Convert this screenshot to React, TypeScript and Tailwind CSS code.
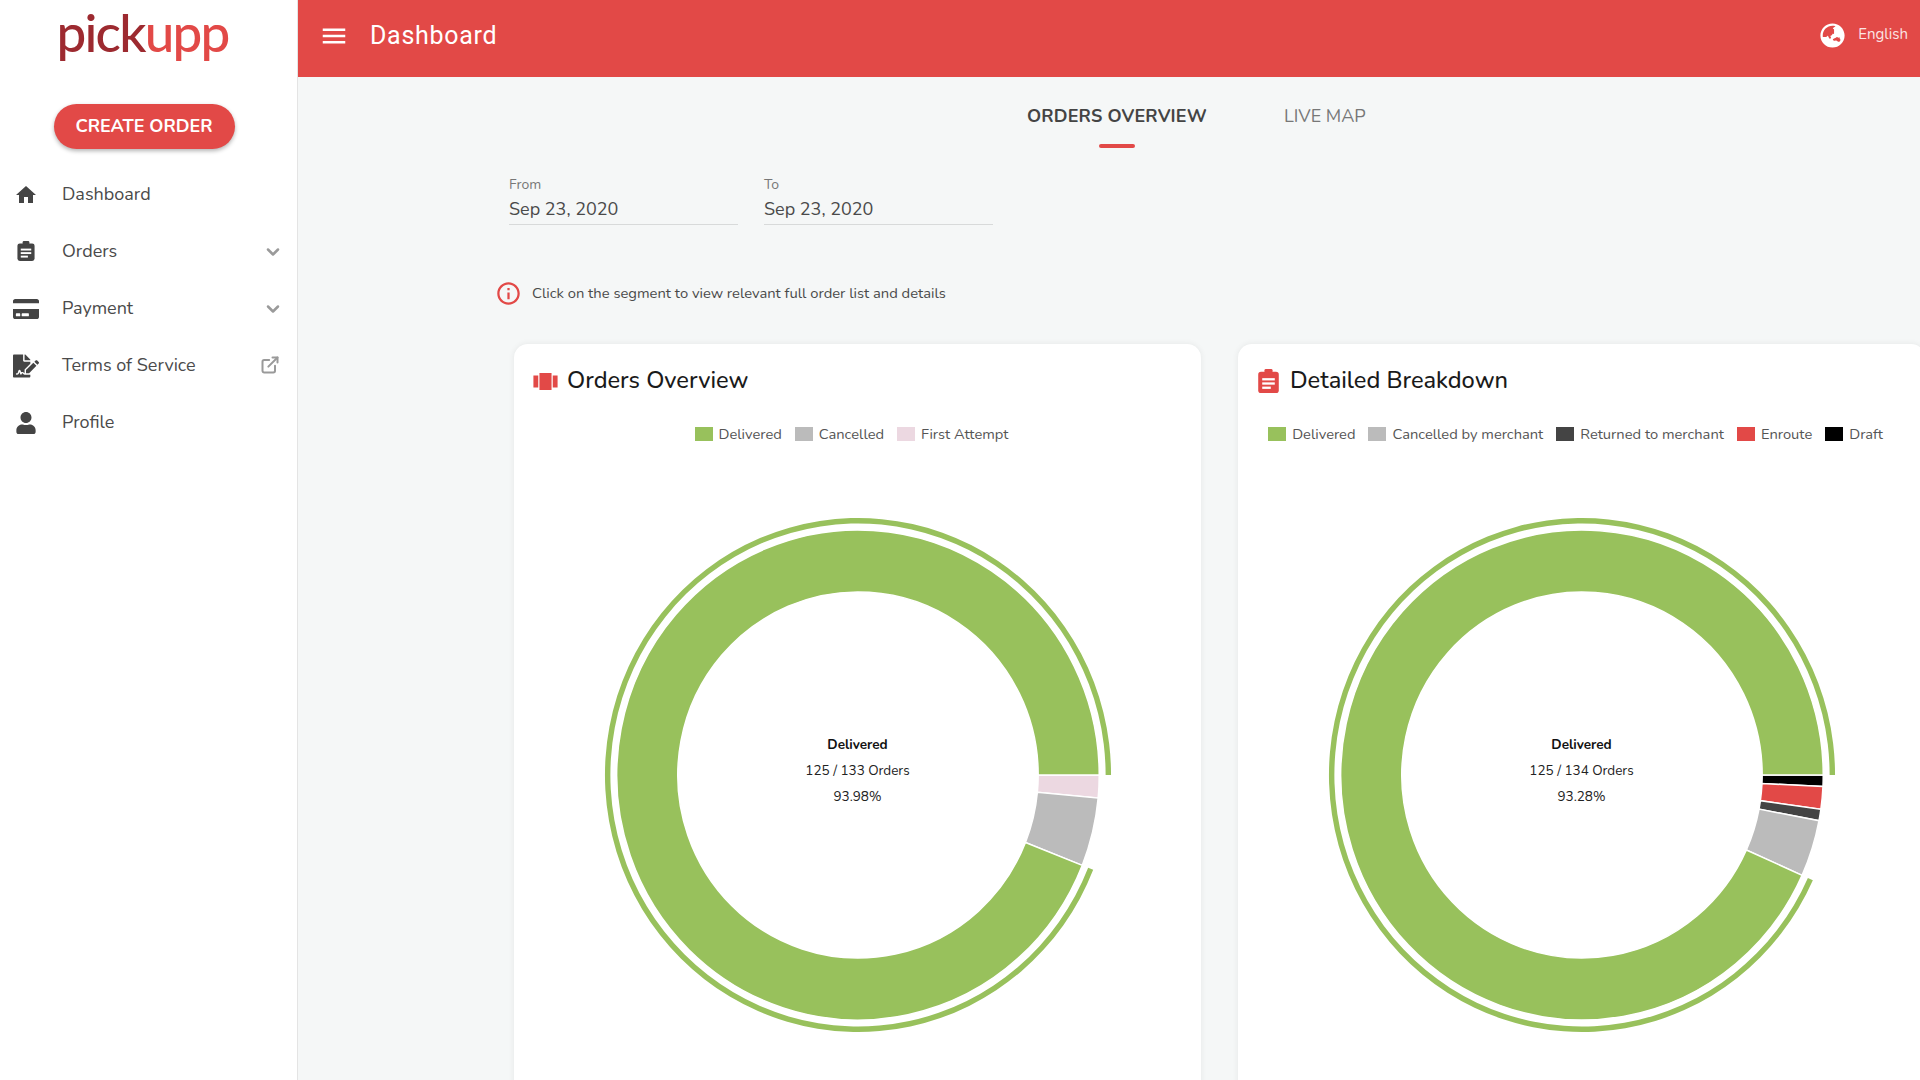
import React from "react";
import { MdHome, MdMenu, MdInfoOutline, MdViewCarousel } from "react-icons/md";
import { FaCreditCard, FaFileSignature, FaUser, FaGlobeAsia } from "react-icons/fa";
import { ExternalLink, ChevronDown } from "lucide-react";

const GREEN = "#98c15c";
const GRAY = "#bbbbbb";
const PINK = "#ecd8e1";
const DARK = "#444444";
const RED = "#e24947";
const BLACK = "#000000";

type Seg = { v: number; c: string };

function pt(r: number, deg: number, c: number) {
  const a = (deg * Math.PI) / 180;
  return [c + r * Math.cos(a), c + r * Math.sin(a)];
}

function sector(ri: number, ro: number, a0: number, a1: number, c: number) {
  const large = a1 - a0 > 180 ? 1 : 0;
  const [x0, y0] = pt(ro, a0, c);
  const [x1, y1] = pt(ro, a1, c);
  const [x2, y2] = pt(ri, a1, c);
  const [x3, y3] = pt(ri, a0, c);
  return `M${x0} ${y0}A${ro} ${ro} 0 ${large} 1 ${x1} ${y1}L${x2} ${y2}A${ri} ${ri} 0 ${large} 0 ${x3} ${y3}Z`;
}

function Donut({ segs, l1, l2, l3 }: { segs: Seg[]; l1: string; l2: string; l3: string }) {
  const total = segs.reduce((s, x) => s + x.v, 0);
  const C = 260;
  let a = 0;
  const parts = segs.map((s) => {
    const a0 = a;
    a += (s.v / total) * 360;
    return { ...s, a0, a1: a };
  });
  const last = parts[parts.length - 1];
  return (
    <div className="relative w-[512px] h-[520px] mx-auto">
      <svg width="512" height="520" viewBox="0 0 520 520" preserveAspectRatio="none" className="block">
        {parts.map((p, i) => (
          <path key={i} d={sector(183, 245, p.a0, p.a1, C)} fill={p.c} stroke="#ffffff" strokeWidth="1.5" />
        ))}
        <path d={sector(251.5, 257, last.a0, last.a1, C)} fill={GREEN} />
      </svg>
      <div className="absolute inset-0 pb-[9px] flex flex-col items-center justify-center text-[13.5px] leading-[26px] text-[#222222]">
        <div className="font-bold text-[#111111]">{l1}</div>
        <div>{l2}</div>
        <div>{l3}</div>
      </div>
    </div>
  );
}

function Legend({ color, label }: { color: string; label: string }) {
  return (
    <div className="flex items-center gap-[6px]">
      <span className="w-[18px] h-[14px] shrink-0" style={{ backgroundColor: color }} />
      <span className="text-[14.7px] text-[#555555] whitespace-nowrap">{label}</span>
    </div>
  );
}

function ClipboardIcon({ color, line, className }: { color: string; line: string; className?: string }) {
  return (
    <svg viewBox="0 0 18 21" className={className} fill="none">
      <rect x="0" y="2.5" width="18" height="18.5" rx="2.5" fill={color} />
      <rect x="5.5" y="0" width="7" height="5" rx="1.2" fill={color} />
      <rect x="3.5" y="8" width="11" height="2" fill={line} />
      <rect x="3.5" y="11.7" width="11" height="2" fill={line} />
      <rect x="3.5" y="15.4" width="7.5" height="2" fill={line} />
    </svg>
  );
}

function NavItem({ icon, label, right }: { icon: React.ReactNode; label: string; right?: React.ReactNode }) {
  return (
    <div className="h-[57px] flex items-center pl-[13px] pr-[13px]">
      <div className="w-[26px] h-[26px] flex items-center justify-center text-[#444444] shrink-0">{icon}</div>
      <span className="ml-[23px] text-[18px] text-[#4a4a4a]">{label}</span>
      <div className="ml-auto flex items-center text-[#9a9a9a]">{right}</div>
    </div>
  );
}

function Card({
  icon,
  title,
  inset,
  children,
}: {
  icon: React.ReactNode;
  title: string;
  inset: string;
  children: React.ReactNode;
}) {
  return (
    <div className="w-[687px] h-[780px] shrink-0 bg-white rounded-[14px] shadow-[0_0_6px_rgba(0,0,0,0.07)] pt-[21px]">
      <div className={`flex items-center h-[32px] ${inset}`}>
        <div className="w-[24px] flex items-center justify-center">{icon}</div>
        <span className="ml-[10px] text-[23.6px] font-medium text-[#1a1a1a]">{title}</span>
      </div>
      {children}
    </div>
  );
}

function DateField({ label, value }: { label: string; value: string }) {
  return (
    <div className="w-[229px] border-b border-[#d8dada] h-[50px]">
      <div className="text-[14px] leading-[18px] text-[#777777] pt-[1px]">{label}</div>
      <div className="text-[18px] leading-[28px] text-[#4a4a4a] mt-[1px]">{value}</div>
    </div>
  );
}

const chevron = <ChevronDown size={20} strokeWidth={3} className="mr-[1px]" />;

export default function App() {
  return (
    <div className="flex h-screen w-full overflow-hidden bg-[#f5f7f7] font-['Nunito','Lato',sans-serif]">
      <aside className="w-[298px] shrink-0 bg-white border-r border-[#e4e4e4] flex flex-col">
        <div className="h-[77px] flex justify-center items-start pr-[12px]">
          <span className="text-[53px] leading-[64px] font-medium font-['Lato',sans-serif] tracking-[-1.8px]">
            <span className="text-[#9d2a30]">pick</span>
            <span className="text-[#e24947]">upp</span>
          </span>
        </div>
        <div className="flex justify-center pt-[27px] pr-[9px]">
          <button className="w-[181px] h-[45px] rounded-full bg-[#e24947] text-white text-[18px] font-bold shadow-[0_2px_4px_rgba(0,0,0,0.3)]">
            CREATE ORDER
          </button>
        </div>
        <nav className="mt-[17px] flex flex-col">
          <NavItem icon={<MdHome size={24} />} label="Dashboard" />
          <NavItem
            icon={<ClipboardIcon color="#444444" line="#ffffff" className="w-[18px] h-[20px] mb-[2px]" />}
            label="Orders"
            right={chevron}
          />
          <NavItem icon={<FaCreditCard size={26} />} label="Payment" right={chevron} />
          <NavItem
            icon={<FaFileSignature size={26} />}
            label="Terms of Service"
            right={<ExternalLink size={20} strokeWidth={2.4} className="mr-[4px] mb-[1px]" />}
          />
          <NavItem icon={<FaUser size={22} />} label="Profile" />
        </nav>
      </aside>

      <main className="flex-1 min-w-0 flex flex-col">
        <header className="h-[77px] shrink-0 bg-[#e24947] flex items-center pl-[21px] pr-[12px] pb-[5px] text-white">
          <MdMenu size={30} />
          <span className="ml-[21px] text-[25px] font-['Roboto',sans-serif] tracking-[0.7px]">Dashboard</span>
          <FaGlobeAsia size={25} className="ml-auto mb-[1px]" />
          <span className="ml-[13px] mb-[3px] text-[15px] text-[#fbe4e4]">English</span>
        </header>

        <div className="flex-1 min-h-0 overflow-hidden">
          <div className="flex gap-[77px] pl-[729px] pt-[26px]">
            <div className="flex flex-col items-center">
              <span className="text-[18px] leading-[26px] font-bold text-[#444444] tracking-[0.15px]">ORDERS OVERVIEW</span>
              <span className="mt-[15px] w-[36px] h-[4px] rounded-full bg-[#e24947]" />
            </div>
            <span className="text-[18px] leading-[26px] text-[#777777]">LIVE MAP</span>
          </div>

          <div className="flex gap-[26px] pl-[211px] mt-[27px]">
            <DateField label="From" value="Sep 23, 2020" />
            <DateField label="To" value="Sep 23, 2020" />
          </div>

          <div className="flex items-center pl-[197px] mt-[55px] h-[26px]">
            <MdInfoOutline size={27} className="text-[#e24947]" />
            <span className="ml-[10px] text-[14.75px] text-[#4a4a4a]">Click on the segment to view relevant full order list and details</span>
          </div>

          <div className="flex gap-[37px] pl-[216px] mt-[38px]">
            <Card inset="pl-[19px]" icon={<MdViewCarousel size={29} className="shrink-0 text-[#e24947]" />} title="Orders Overview">
              <div className="flex justify-center gap-[13px] mt-[25px] h-[24px] pr-[12px]">
                <Legend color={GREEN} label="Delivered" />
                <Legend color={GRAY} label="Cancelled" />
                <Legend color={PINK} label="First Attempt" />
              </div>
              <div className="mt-[69px]">
                <Donut
                  segs={[
                    { v: 2, c: PINK },
                    { v: 6, c: GRAY },
                    { v: 125, c: GREEN },
                  ]}
                  l1="Delivered"
                  l2="125 / 133 Orders"
                  l3="93.98%"
                />
              </div>
            </Card>
            <Card
              inset="pl-[18px]"
              icon={<ClipboardIcon color="#e24947" line="#ffffff" className="w-[21px] h-[24px] shrink-0" />}
              title="Detailed Breakdown"
            >
              <div className="flex justify-center gap-[13px] mt-[25px] h-[24px] pr-[12px]">
                <Legend color={GREEN} label="Delivered" />
                <Legend color={GRAY} label="Cancelled by merchant" />
                <Legend color={DARK} label="Returned to merchant" />
                <Legend color={RED} label="Enroute" />
                <Legend color={BLACK} label="Draft" />
              </div>
              <div className="mt-[69px]">
                <Donut
                  segs={[
                    { v: 1, c: BLACK },
                    { v: 2, c: RED },
                    { v: 1, c: DARK },
                    { v: 5, c: GRAY },
                    { v: 125, c: GREEN },
                  ]}
                  l1="Delivered"
                  l2="125 / 134 Orders"
                  l3="93.28%"
                />
              </div>
            </Card>
          </div>
        </div>
      </main>
    </div>
  );
}
